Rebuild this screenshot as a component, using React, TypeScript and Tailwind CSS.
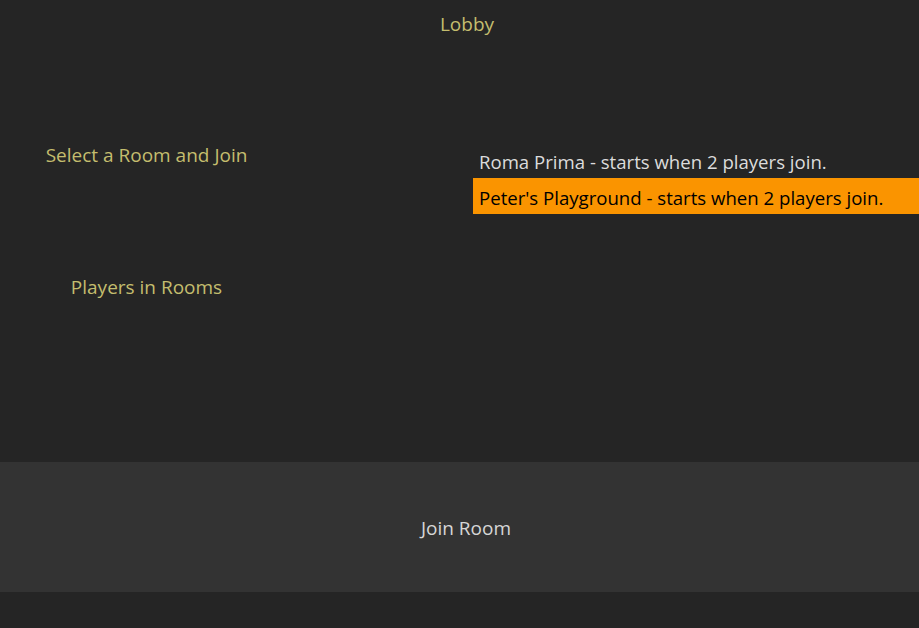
export default function App() {
  const rooms = [
    { name: 'Roma Prima', players: 2 },
    { name: "Peter's Playground", players: 2 },
  ]
  const selected = 1

  return (
    <div
      className="h-screen w-full bg-[#252525] flex flex-col overflow-hidden"
      style={{ fontFamily: '"Open Sans", "Noto Sans", sans-serif' }}
    >
      <header className="h-[48px] flex items-center justify-center pl-[15px] text-[19px] text-[#c4bd6e]">
        Lobby
      </header>

      <div className="flex h-[414px]">
        <div className="w-[293px] flex flex-col items-center pt-[95px] gap-[108px] text-[19px] text-[#c4bd6e]">
          <div className="h-[24px] leading-[24px] whitespace-nowrap">Select a Room and Join</div>
          <div className="h-[24px] leading-[24px] whitespace-nowrap">Players in Rooms</div>
        </div>
        <div className="w-[180px]" />
        <ul className="flex-1 pt-[94px]">
          {rooms.map((r, i) => (
            <li
              key={r.name}
              className={`h-[36px] flex items-center px-[6px] pt-[3px] text-[18.6px] whitespace-nowrap ${
                i === selected ? 'bg-[#fa9400] text-black' : 'text-[#dcdcdc]'
              }`}
            >
              {r.name} - starts when {r.players} players join.
            </li>
          ))}
        </ul>
      </div>

      <button className="h-[130px] w-full bg-[#333333] flex items-center justify-center pl-[13px] pt-[3px] text-[19px] text-[#d6d6d6]">
        Join Room
      </button>
    </div>
  )
}
